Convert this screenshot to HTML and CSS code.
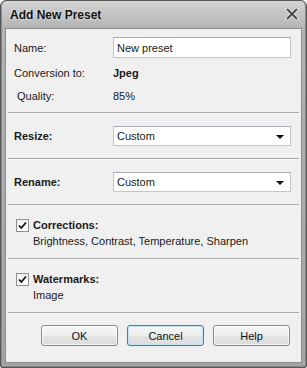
FILE: index.html
```html
<!DOCTYPE html>
<html lang="en">
<head>
  <meta charset="UTF-8" />
  <title>Add New Preset</title>
  <link rel="stylesheet" href="styles.css">
</head>
<body>

  <div class="window">
    <div class="titlebar">
      <span class="title">Add New Preset</span>
      <svg class="close" width="14" height="12" viewBox="0 0 14 12">
        <path d="M2 1 L12 11 M12 1 L2 11" stroke="#e0e0e0" stroke-width="4" stroke-linecap="round"/>
        <path d="M2 1 L12 11 M12 1 L2 11" stroke="#4b4b4b" stroke-width="2"/>
      </svg>
    </div>

    <div class="client">
      <div class="section general">
        <div class="row name-row">
          <span class="label">Name:</span>
          <div class="field">New preset</div>
        </div>
        <div class="row info-row">
          <span class="label">Conversion to:</span>
          <span class="value bold">Jpeg</span>
        </div>
        <div class="row info-row quality">
          <span class="label">Quality:</span>
          <span class="value">85%</span>
        </div>
      </div>

      <div class="sep"></div>

      <div class="section combo-section">
        <div class="row">
          <span class="label bold">Resize:</span>
          <div class="field combo">
            <span>Custom</span>
            <span class="arrow"></span>
          </div>
        </div>
      </div>

      <div class="sep"></div>

      <div class="section combo-section">
        <div class="row">
          <span class="label bold">Rename:</span>
          <div class="field combo">
            <span>Custom</span>
            <span class="arrow"></span>
          </div>
        </div>
      </div>

      <div class="sep"></div>

      <div class="section check-section">
        <div class="check-row">
          <span class="checkbox">
            <svg width="9" height="9" viewBox="0 0 9 9"><path d="M1 4.5 L3.3 7 L8 1.5" fill="none" stroke="#111" stroke-width="1.8"/></svg>
          </span>
          <span class="bold">Corrections:</span>
        </div>
        <div class="desc">Brightness, Contrast, Temperature, Sharpen</div>
      </div>

      <div class="sep"></div>

      <div class="section check-section">
        <div class="check-row">
          <span class="checkbox">
            <svg width="9" height="9" viewBox="0 0 9 9"><path d="M1 4.5 L3.3 7 L8 1.5" fill="none" stroke="#111" stroke-width="1.8"/></svg>
          </span>
          <span class="bold">Watermarks:</span>
        </div>
        <div class="desc">Image</div>
      </div>

      <div class="sep"></div>

      <div class="buttons">
        <button>OK</button>
        <button class="default">Cancel</button>
        <button>Help</button>
      </div>
    </div>
  </div>

</body>
</html>
```

FILE: styles.css
```css
body {
  margin: 0;
  padding: 0;
  background: #ffffff;
  font-family: Tahoma, 'Liberation Sans', Arial, sans-serif;
  font-size: 11px;
  color: #1a1a1a;
}

.window {
  width: 307px;
  height: 368px;
  box-sizing: border-box;
  border: 1px solid #555555;
  border-radius: 6px 6px 2px 2px;
  background: linear-gradient(to bottom, #d4d4d4 0px, #b2b2b2 28px, #a4a4a4 100%);
  box-shadow: inset 1px 0 0 #8a8a8a, inset -1px 0 0 #8a8a8a, inset 0 -1px 0 #8a8a8a;
  padding: 0 4px 4px 4px;
  display: flex;
  flex-direction: column;
}

.titlebar {
  height: 27px;
  display: flex;
  align-items: center;
  justify-content: space-between;
  padding: 0 2px 0 5px;
}

.title {
  font-size: 12px;
  font-weight: bold;
  color: #111;
  text-shadow: 0 0 3px rgba(255,255,255,0.8);
  margin-top: 1px;
}

.close {
  margin-top: -1px;
  margin-right: 1px;
}

.client {
  flex: 1;
  background: #f0f0f0;
  border: 1px solid #8c8c8c;
  display: flex;
  flex-direction: column;
}

.bold {
  font-weight: bold;
}

.row {
  display: flex;
  align-items: center;
  padding: 0 10px 0 8px;
}

.label {
  width: 99px;
  flex-shrink: 0;
}

.general {
  padding-top: 8px;
  padding-bottom: 6px;
}

.name-row {
  height: 21px;
}

.info-row {
  height: 20px;
  margin-top: 5px;
}

.quality {
  margin-top: 3px;
  padding-left: 11px;
}

.quality .label {
  width: 96px;
}

.field {
  flex: 1;
  height: 21px;
  box-sizing: border-box;
  background: #ffffff;
  border: 1px solid #c2c5ca;
  border-top-color: #a9adb3;
  padding: 0 3px;
  display: flex;
  align-items: center;
}

.sep {
  height: 1px;
  margin: 0 2px;
  background: #a8a8a8;
  border-bottom: 1px solid #f8f8f8;
}

.combo-section {
  padding-top: 12px;
  padding-bottom: 12px;
}

.combo {
  height: 20px;
  justify-content: space-between;
  padding-right: 6px;
}

.arrow {
  width: 0;
  height: 0;
  border-left: 4px solid transparent;
  border-right: 4px solid transparent;
  border-top: 4px solid #111;
  margin-top: 1px;
}

.check-section {
  padding: 11px 0 9px 10px;
}

.check-row {
  display: flex;
  align-items: center;
  height: 16px;
  gap: 4px;
}

.checkbox {
  width: 13px;
  height: 13px;
  box-sizing: border-box;
  border: 1px solid #8f8f8f;
  background: linear-gradient(to bottom, #f0f0f0, #ffffff);
  display: flex;
  align-items: center;
  justify-content: center;
}

.desc {
  height: 16px;
  line-height: 16px;
  padding-left: 17px;
}

.buttons {
  display: flex;
  justify-content: flex-end;
  gap: 9px;
  padding: 11px 11px 0 0;
}

button {
  width: 77px;
  height: 21px;
  font-family: Tahoma, 'Liberation Sans', Arial, sans-serif;
  font-size: 11px;
  color: #111;
  border: 1px solid #8a8a8a;
  border-radius: 3px;
  background: linear-gradient(to bottom, #f6f6f6 0%, #eeeeee 50%, #e4e4e4 51%, #dcdcdc 100%);
  box-shadow: inset 0 0 0 1px rgba(255,255,255,0.7);
  padding: 0;
}

button.default {
  border-color: #3c7fb1;
  box-shadow: inset 0 0 0 1px #c4e5f6;
}
```
